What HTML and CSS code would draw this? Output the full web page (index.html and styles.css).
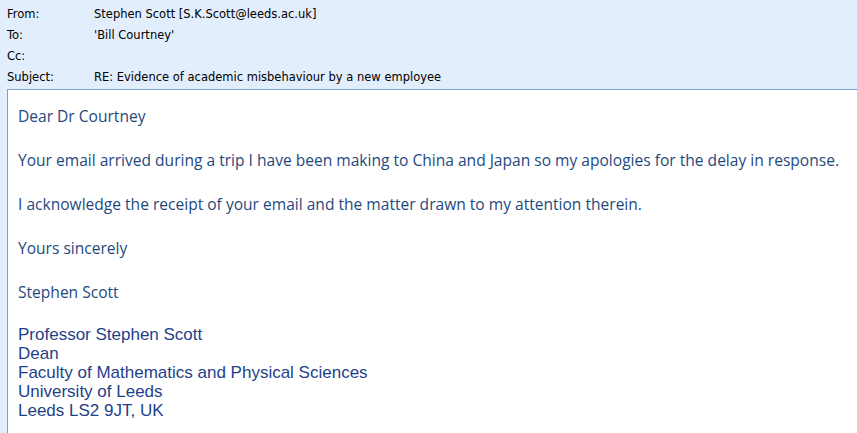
FILE: index.html
```html
<!DOCTYPE html>
<html>
<head>
<meta charset="utf-8">
<link rel="stylesheet" href="styles.css">
</head>
<body>
<div class="window">
  <div class="header">
    <div class="row"><span class="label">From:</span><span class="value">Stephen Scott [S.K.Scott@leeds.ac.uk]</span></div>
    <div class="row"><span class="label">To:</span><span class="value">'Bill Courtney'</span></div>
    <div class="row"><span class="label">Cc:</span><span class="value"></span></div>
    <div class="row"><span class="label">Subject:</span><span class="value">RE: Evidence of academic misbehaviour by a new employee</span></div>
  </div>
  <div class="body">
    <p class="para">Dear Dr Courtney</p>
    <p class="para">Your email arrived during a trip I have been making to China and Japan so my apologies for the delay in response.</p>
    <p class="para">I acknowledge the receipt of your email and the matter drawn to my attention therein.</p>
    <p class="para">Yours sincerely</p>
    <p class="para">Stephen Scott</p>
    <div class="sig">
      <div>Professor Stephen Scott</div>
      <div>Dean</div>
      <div>Faculty of Mathematics and Physical Sciences</div>
      <div>University of Leeds</div>
      <div>Leeds LS2 9JT, UK</div>
    </div>
  </div>
</div>
</body>
</html>
```

FILE: styles.css
```css
html, body {
  margin: 0;
  padding: 0;
  width: 857px;
  height: 433px;
  overflow: hidden;
  background: #e3eefc;
}
.window {
  display: flex;
  flex-direction: column;
  height: 433px;
}
.header {
  padding: 3px 0 0 7px;
  font-family: "DejaVu Sans", sans-serif;
  font-size: 11.5px;
  color: #000;
}
.row {
  display: flex;
  height: 21px;
  align-items: center;
}
.label {
  width: 87px;
  flex: none;
}
.body {
  flex: 1;
  margin-left: 7px;
  margin-top: 2px;
  background: #fff;
  border-left: 1px solid #7a9fd6;
  border-top: 1px solid #7a9fd6;
  padding: 15px 0 0 10px;
  color: #1f497d;
}
.para {
  margin: 0 0 22px 0;
  font-family: "Open Sans", sans-serif;
  font-size: 15.57px;
  line-height: 22px;
  white-space: nowrap;
}
.sig {
  margin-top: 0;
  font-family: "Liberation Sans", Arial, sans-serif;
  font-size: 17px;
  line-height: 19px;
  color: #1f3f8a;
}
```
